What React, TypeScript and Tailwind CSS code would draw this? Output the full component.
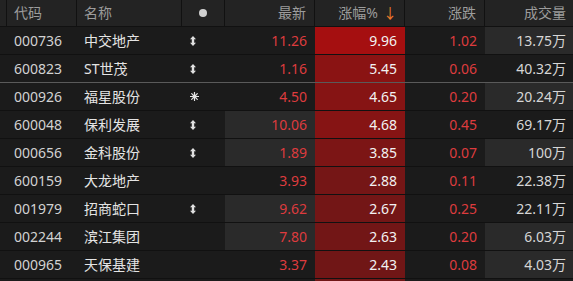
import React from "react";

type Row = {
  code: string;
  name: string;
  icon: "arrow" | "star" | null;
  last: string;
  pct: string;
  chg: string;
  vol: string;
  pctBg: string;
  hiLast?: boolean;
  hiVol?: boolean;
  sep?: boolean;
};

const rows: Row[] = [
  { code: "000736", name: "中交地产", icon: "arrow", last: "11.26", pct: "9.96", chg: "1.02", vol: "13.75万", pctBg: "bg-[#a50f10]", hiVol: true },
  { code: "600823", name: "ST世茂", icon: "arrow", last: "1.16", pct: "5.45", chg: "0.06", vol: "40.32万", pctBg: "bg-[#8a1313]", sep: true },
  { code: "000926", name: "福星股份", icon: "star", last: "4.50", pct: "4.65", chg: "0.20", vol: "20.24万", pctBg: "bg-[#861414]", hiVol: true },
  { code: "600048", name: "保利发展", icon: "arrow", last: "10.06", pct: "4.68", chg: "0.45", vol: "69.17万", pctBg: "bg-[#861414]", hiLast: true },
  { code: "000656", name: "金科股份", icon: "arrow", last: "1.89", pct: "3.85", chg: "0.07", vol: "100万", pctBg: "bg-[#7c1515]", hiLast: true, hiVol: true },
  { code: "600159", name: "大龙地产", icon: null, last: "3.93", pct: "2.88", chg: "0.11", vol: "22.38万", pctBg: "bg-[#751616]" },
  { code: "001979", name: "招商蛇口", icon: "arrow", last: "9.62", pct: "2.67", chg: "0.25", vol: "22.11万", pctBg: "bg-[#731616]", hiLast: true },
  { code: "002244", name: "滨江集团", icon: null, last: "7.80", pct: "2.63", chg: "0.20", vol: "6.03万", pctBg: "bg-[#721616]", hiLast: true, hiVol: true },
  { code: "000965", name: "天保基建", icon: null, last: "3.37", pct: "2.43", chg: "0.08", vol: "4.03万", pctBg: "bg-[#701616]", hiVol: true },
  { code: "", name: "", icon: null, last: "", pct: "", chg: "", vol: "", pctBg: "bg-[#701616]" },
];

const cols = "grid grid-cols-[7px_70px_105px_43px_90px_90px_80px_88px]";

function ArrowIcon() {
  return (
    <svg width="6" height="10" viewBox="0 0 6 10">
      <polygon points="3,0 6,3.2 4.2,3.2 4.2,6.8 6,6.8 3,10 0,6.8 1.8,6.8 1.8,3.2 0,3.2" fill="#e0e0e0" />
    </svg>
  );
}

function StarIcon() {
  return (
    <svg width="9" height="9" viewBox="0 0 9 9">
      <g stroke="#e6e6e6" strokeWidth="1.2" strokeLinecap="round">
        <line x1="4.5" y1="0.5" x2="4.5" y2="8.5" />
        <line x1="0.5" y1="4.5" x2="8.5" y2="4.5" />
        <line x1="1.7" y1="1.7" x2="7.3" y2="7.3" />
        <line x1="7.3" y1="1.7" x2="1.7" y2="7.3" />
      </g>
      <circle cx="4.5" cy="4.5" r="2" fill="#e6e6e6" />
    </svg>
  );
}

export default function App() {
  return (
    <div
      className="w-[573px] h-[281px] overflow-hidden bg-[#1b1b1b] text-[14px] leading-none"
      style={{ fontFamily: '"Noto Sans", "Noto Sans CJK SC", sans-serif' }}
    >
      <div className={`${cols} h-[27px] bg-[#232323] border-b border-[#111111] text-[#9c9c9c]`}>
        <div className="border-r border-[#111111]" />
        <div className="flex items-center pl-[7px] border-r border-[#111111]">代码</div>
        <div className="flex items-center pl-[7px] border-r border-[#111111]">名称</div>
        <div className="flex items-center justify-center border-r border-[#111111]">
          <span className="block w-[8px] h-[8px] rounded-full bg-[#d0d0d0]" />
        </div>
        <div className="flex items-center justify-end pr-[8px] border-r border-[#111111]">最新</div>
        <div className="flex items-center justify-end pr-[7px] border-r border-[#111111]">
          涨幅%<span className="ml-[5px] text-[#f07a2a]">↓</span>
        </div>
        <div className="flex items-center justify-end pr-[8px] border-r border-[#111111]">涨跌</div>
        <div className="flex items-center justify-end pr-[7px]">成交量</div>
      </div>
      {rows.map((r, i) => (
        <div
          key={i}
          className={`${cols} h-[28px] border-b ${r.sep ? "border-[#5a5a5a]" : "border-[#111111]"}`}
        >
          <div />
          <div className="flex items-center pl-[7px] text-[#d2d2d2]">{r.code}</div>
          <div className="flex items-center pl-[7px] text-[#e4e4e4]">{r.name}</div>
          <div className="flex items-center pl-[8px]">
            {r.icon === "arrow" ? <ArrowIcon /> : r.icon === "star" ? <StarIcon /> : null}
          </div>
          <div
            className={`flex items-center justify-end pr-[8px] text-[#de3b3e] ${r.hiLast ? "bg-[#2a2a2a]" : ""}`}
          >
            {r.last}
          </div>
          <div className={`flex items-center justify-end pr-[8px] text-[#f2f2f2] ${r.pctBg}`}>{r.pct}</div>
          <div className="flex items-center justify-end pr-[8px] text-[#de3b3e]">{r.chg}</div>
          <div
            className={`flex items-center justify-end pr-[7px] text-[#d6d6d6] ${r.hiVol ? "bg-[#2a2a2a]" : ""}`}
          >
            {r.vol}
          </div>
        </div>
      ))}
    </div>
  );
}
